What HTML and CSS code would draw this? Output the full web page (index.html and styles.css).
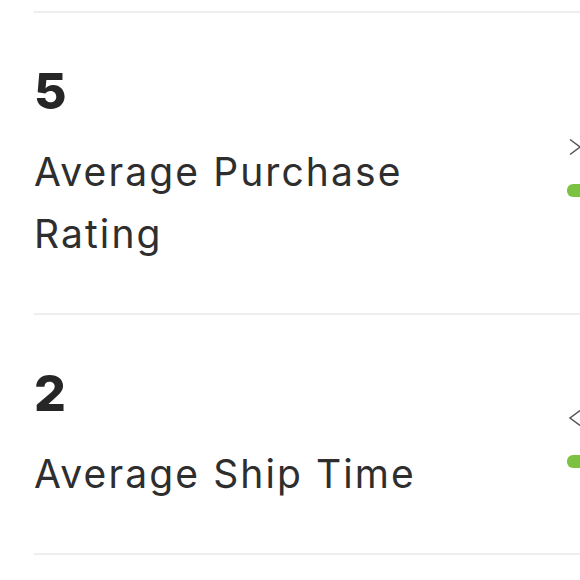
FILE: index.html
```html
<!DOCTYPE html>
<html>
<head>
<meta charset="utf-8">
<link rel="stylesheet" href="styles.css">
</head>
<body>
<div class="list">
  <div class="row">
    <div class="stat">
      <div class="value">5</div>
      <div class="label">Average Purchase<br>Rating</div>
    </div>
    <div class="indicator">
      <svg class="chev" width="14" height="18" viewBox="0 0 14 18"><path d="M2 1.5 L12 9 L2 16.5" fill="none" stroke="#555" stroke-width="1.5"/></svg>
      <div class="bar"></div>
    </div>
  </div>
  <div class="row last">
    <div class="stat">
      <div class="value">2</div>
      <div class="label">Average Ship Time</div>
    </div>
    <div class="indicator">
      <svg class="chev" width="14" height="18" viewBox="0 0 14 18"><path d="M12 1.5 L2 9 L12 16.5" fill="none" stroke="#555" stroke-width="1.5"/></svg>
      <div class="bar"></div>
    </div>
  </div>
</div>
</body>
</html>
```
FILE: styles.css
```css
html, body {
  margin: 0;
  padding: 0;
  background: #fff;
  overflow: hidden;
}
body {
  font-family: Inter, "Liberation Sans", sans-serif;
  color: #2b2b2b;
  font-variant-ligatures: none;
}
.list {
  margin-top: 11px;
  margin-left: 34px;
  width: 640px;
}
.row {
  border-top: 2px solid #eeeeee;
  display: flex;
  align-items: center;
  padding: 52px 0 48px;
}
.row.last {
  border-bottom: 2px solid #eeeeee;
}
.stat {
  width: 533px;
}
.value {
  font-weight: 800;
  font-size: 50px;
  line-height: 52px;
  color: #262626;
}
.label {
  margin-top: 24px;
  font-size: 39px;
  line-height: 62px;
  letter-spacing: 2.1px;
  color: #2e2e2e;
  font-weight: 400;
}
.indicator {
  display: flex;
  flex-direction: column;
  align-items: flex-start;
  gap: 28px;
  margin-top: 4px;
}
.chev {
  display: block;
  margin-left: 1px;
}
.bar {
  width: 60px;
  height: 13px;
  border-radius: 6px;
  background: #7cc242;
}
```
